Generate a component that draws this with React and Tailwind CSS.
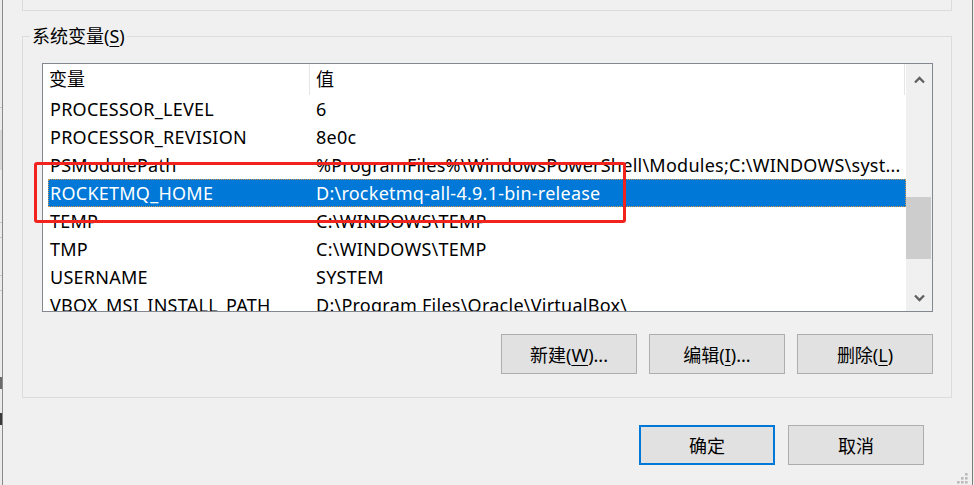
import React from "react";

const rows = [
  ["PROCESSOR_LEVEL", "6"],
  ["PROCESSOR_REVISION", "8e0c"],
  ["PSModulePath", "%ProgramFiles%\\WindowsPowerShell\\Modules;C:\\WINDOWS\\syst..."],
  ["ROCKETMQ_HOME", "D:\\rocketmq-all-4.9.1-bin-release", true],
  ["TEMP", "C:\\WINDOWS\\TEMP"],
  ["TMP", "C:\\WINDOWS\\TEMP"],
  ["USERNAME", "SYSTEM"],
  ["VBOX_MSI_INSTALL_PATH", "D:\\Program Files\\Oracle\\VirtualBox\\"],
];

function Chevron({ down }) {
  return (
    <svg width="11" height="8" viewBox="0 0 11 8">
      <polyline
        points={down ? "1,1.5 5.5,6 10,1.5" : "1,6.5 5.5,2 10,6.5"}
        fill="none"
        stroke="#606060"
        strokeWidth="2.3"
      />
    </svg>
  );
}

function Btn({ children, primary }) {
  return (
    <div
      className={
        "w-[136px] h-[40px] flex items-center justify-center pt-[2px] bg-[#e1e1e1] text-[18px] text-black " +
        (primary ? "border-2 border-[#0078d7]" : "border border-[#adadad]")
      }
    >
      {children}
    </div>
  );
}

export default function App() {
  return (
    <div className="w-[974px] h-[485px] bg-[#f0f0f0] flex overflow-hidden relative font-['Noto_Sans','Noto_Sans_CJK_SC',sans-serif] text-black">
      {/* left strip (window behind) */}
      <div className="w-[2px] h-full flex flex-col bg-[#ebebeb]">
        <div className="h-[107px]" />
        <div className="h-[1px] bg-[#c8c8c8]" />
        <div className="h-[22px]" />
        <div className="h-[40px] bg-[#d9d9d9]" />
        <div className="h-[52px]" />
        <div className="h-[1px] bg-[#c8c8c8]" />
        <div className="h-[14px]" />
        <div className="h-[1px] bg-[#c8c8c8]" />
        <div className="h-[37px]" />
        <div className="h-[1px] bg-[#c8c8c8]" />
        <div className="h-[14px]" />
        <div className="h-[1px] bg-[#c8c8c8]" />
        <div className="h-[86px]" />
        <div className="h-[12px] bg-[#6a6a6a]" />
        <div className="h-[24px]" />
        <div className="h-[12px] bg-[#3a3a3a]" />
      </div>
      <div className="w-[1px] h-full bg-[#8a8a8a]" />

      {/* main dialog content */}
      <div className="w-[969px] h-full flex flex-col pl-[19px]">
        <div className="w-[930px] h-[11px] border-x border-b border-[#dcdcdc]" />

        <div className="relative mt-[25px] w-[930px] h-[362px] border border-[#dcdcdc] pt-[26px] pl-[19px] flex flex-col">
          <div className="absolute left-[7px] top-[-13px] h-[24px] leading-[24px] px-[2px] bg-[#f0f0f0] text-[18px]">
            系统变量(<span className="underline underline-offset-[3px]">S</span>)
          </div>

          {/* list view */}
          <div className="w-[891px] h-[249px] border border-[#828790] bg-white flex">
            <div className="w-[863px] h-full flex flex-col overflow-hidden">
              <div className="h-[31px] flex shrink-0 text-[18px]">
                <div className="w-[267px] h-full border-r border-[#e5e5e5] pl-[6px] flex items-center">变量</div>
                <div className="w-[595px] h-full border-r border-[#e5e5e5] pl-[6px] flex items-center">值</div>
              </div>
              {rows.map(([name, value, sel]) => (
                <div key={name} className="h-[28px] shrink-0 pl-[5px] flex">
                  <div
                    className={
                      "w-[858px] h-full flex items-center text-[18px] tracking-[0.25px] whitespace-nowrap border " +
                      (sel
                        ? "bg-[#0078d7] text-white border-dotted border-[#d49a52]"
                        : "border-transparent")
                    }
                  >
                    <div className="w-[261px] pl-[1px] overflow-hidden">{name}</div>
                    <div className="pl-[6px] overflow-hidden">{value}</div>
                  </div>
                </div>
              ))}
            </div>
            {/* scrollbar */}
            <div className="w-[26px] h-full bg-[#f0f0f0] flex flex-col">
              <div className="h-[32px] flex items-center justify-center">
                <Chevron />
              </div>
              <div className="h-[101px]" />
              <div className="h-[62px] mr-[1px] bg-[#cdcdcd]" />
              <div className="flex-1" />
              <div className="h-[26px] flex items-center justify-center">
                <Chevron down />
              </div>
            </div>
          </div>

          <div className="w-[891px] mt-[22px] flex justify-end gap-[12px]">
            <Btn>
              新建(<span className="underline underline-offset-[3px]">W</span>)...
            </Btn>
            <Btn>
              编辑(<span className="underline underline-offset-[3px]">I</span>)...
            </Btn>
            <Btn>
              删除(<span className="underline underline-offset-[3px]">L</span>)
            </Btn>
          </div>
        </div>

        <div className="w-[930px] mt-[27px] pr-[28px] flex justify-end gap-[13px]">
          <Btn primary>确定</Btn>
          <Btn>取消</Btn>
        </div>
      </div>

      <div className="w-[1px] h-full bg-[#7a7a7a]" />
      <div className="w-[1px] h-full bg-[#f0f0f0]" />

      {/* annotation overlay */}
      <div className="absolute left-[34px] top-[162px] w-[592px] h-[61px] border-[3px] border-[#f2231d] rounded-[3px]" />

      {/* resize grip */}
      <svg className="absolute left-[956px] top-[472px]" width="12" height="12" viewBox="0 0 12 12">
        <rect x="9" y="1" width="2.6" height="2.6" fill="#bcbcbc" />
        <rect x="5" y="5" width="2.6" height="2.6" fill="#bcbcbc" />
        <rect x="9" y="5" width="2.6" height="2.6" fill="#bcbcbc" />
        <rect x="1" y="9" width="2.6" height="2.6" fill="#bcbcbc" />
        <rect x="5" y="9" width="2.6" height="2.6" fill="#bcbcbc" />
        <rect x="9" y="9" width="2.6" height="2.6" fill="#bcbcbc" />
      </svg>
    </div>
  );
}
